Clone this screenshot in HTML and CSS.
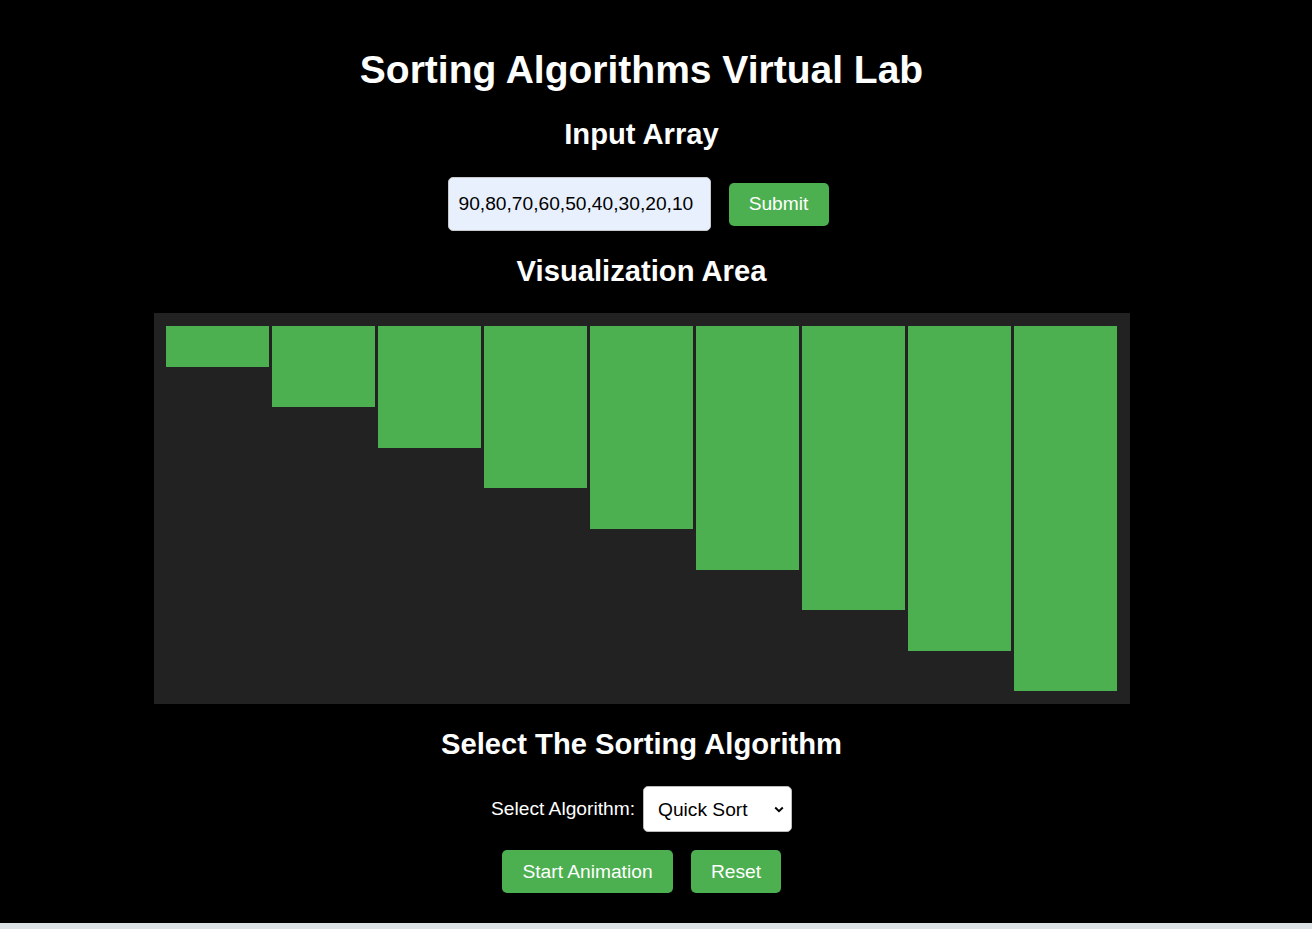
FILE: index.html
```html
<!DOCTYPE html>
<html lang="en">
<head>
<meta charset="utf-8">
<title>Sorting Algorithms Virtual Lab</title>
<link rel="stylesheet" href="styles.css">
</head>
<body>
<div class="page">
  <h1 class="title">Sorting Algorithms Virtual Lab</h1>
  <h2 class="section-title section-input">Input Array</h2>
  <div class="input-row">
    <input class="array-input" type="text" value="90,80,70,60,50,40,30,20,10">
    <button class="btn btn-submit">Submit</button>
  </div>
  <h2 class="section-title section-viz">Visualization Area</h2>
  <div class="viz">
    <div class="bar" style="height:40.6px"></div>
    <div class="bar" style="height:81.2px"></div>
    <div class="bar" style="height:121.8px"></div>
    <div class="bar" style="height:162.4px"></div>
    <div class="bar" style="height:203px"></div>
    <div class="bar" style="height:243.6px"></div>
    <div class="bar" style="height:284.2px"></div>
    <div class="bar" style="height:324.8px"></div>
    <div class="bar" style="height:365.4px"></div>
  </div>
  <h2 class="section-title section-select">Select The Sorting Algorithm</h2>
  <div class="select-row">
    <label class="select-label" for="algo">Select Algorithm:</label>
    <select id="algo" class="algo-select">
      <option>Quick Sort</option>
      <option>Bubble Sort</option>
      <option>Merge Sort</option>
    </select>
  </div>
  <div class="button-row">
    <button class="btn btn-start">Start Animation</button>
    <button class="btn btn-reset">Reset</button>
  </div>
</div>
<div class="bottom-strip"></div>
</body>
</html>
```

FILE: styles.css
```css
html, body {
  margin: 0;
  padding: 0;
}

body {
  background: #000;
  color: #fff;
  font-family: "Liberation Sans", Arial, sans-serif;
  text-align: center;
  overflow: hidden;
}

.page {
  box-sizing: border-box;
  height: 923px;
  padding-top: 48px;
  padding-right: 29px;
  display: flex;
  flex-direction: column;
  align-items: center;
}

.title {
  margin: 0;
  font-size: 39px;
  line-height: 44px;
  font-weight: bold;
}

.section-title {
  margin: 0;
  font-size: 29.2px;
  line-height: 34px;
  font-weight: bold;
}

.section-input {
  margin-top: 25px;
}

.section-viz {
  margin-top: 23px;
}

.section-select {
  margin-top: 23px;
}

.input-row {
  margin-top: 26px;
  display: flex;
  align-items: center;
  gap: 18px;
  padding-right: 7px;
}

.array-input {
  box-sizing: border-box;
  width: 263px;
  height: 54px;
  padding: 0 10px;
  border: 1px solid #c8c8c8;
  border-radius: 5px;
  background: #e8f0fe;
  color: #000;
  font-family: "Liberation Sans", Arial, sans-serif;
  font-size: 19.2px;
  outline: none;
}

.btn {
  box-sizing: border-box;
  height: 43px;
  padding: 0 20px;
  border: none;
  border-radius: 5px;
  background: #4caf50;
  color: #fff;
  font-family: "Liberation Sans", Arial, sans-serif;
  font-size: 19.2px;
  cursor: pointer;
}

.btn-submit {
  width: 100px;
  padding: 0;
}

.viz {
  box-sizing: border-box;
  margin-top: 25px;
  width: 976px;
  height: 391px;
  padding: 13px 12px 12px 12px;
  background: #222;
  display: flex;
  align-items: flex-start;
  gap: 3px;
}

.bar {
  flex: 1;
  background: #4caf50;
}

.select-row {
  margin-top: 25px;
  display: flex;
  align-items: center;
  gap: 8px;
}

.select-label {
  font-size: 19.2px;
  color: #fff;
}

.algo-select {
  box-sizing: border-box;
  width: 149px;
  height: 46px;
  padding: 0 14px;
  border: 1px solid #bbb;
  border-radius: 5px;
  background-color: #fff;
  color: #000;
  font-family: "Liberation Sans", Arial, sans-serif;
  font-size: 19.2px;
  appearance: none;
  -webkit-appearance: none;
  background-image: url("data:image/svg+xml,%3Csvg xmlns='http://www.w3.org/2000/svg' width='10' height='7' viewBox='0 0 10 7'%3E%3Cpath d='M1.2 1.5 L5 5.2 L8.8 1.5' fill='none' stroke='%23000' stroke-width='1.9'/%3E%3C/svg%3E");
  background-repeat: no-repeat;
  background-position: right 7px center;
  background-size: 10px 7px;
  outline: none;
}

.button-row {
  margin-top: 18px;
  display: flex;
  gap: 18px;
}

.btn-start {
  width: 171px;
  padding: 0;
}

.btn-reset {
  width: 90px;
  padding: 0;
}

.bottom-strip {
  height: 6px;
  background: #dde2e4;
}
```
